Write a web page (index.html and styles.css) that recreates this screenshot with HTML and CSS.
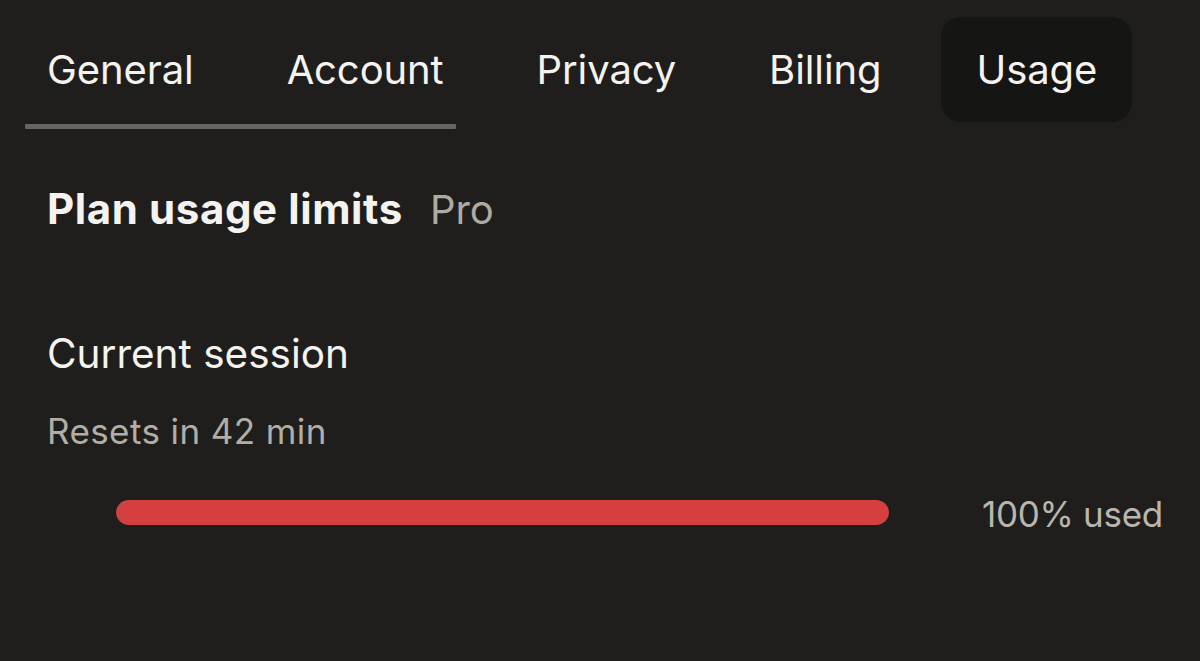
FILE: index.html
```html
<!DOCTYPE html>
<html lang="en">
<head>
<meta charset="utf-8">
<title>Usage</title>
<link rel="stylesheet" href="styles.css">
</head>
<body>
<div class="page">
  <nav class="tabs">
    <div class="tab">General</div>
    <div class="tab">Account</div>
    <div class="tab">Privacy</div>
    <div class="tab">Billing</div>
    <div class="tab active">Usage</div>
  </nav>
  <div class="indicator"></div>
  <section class="content">
    <div class="plan">
      <h1 class="plan-title">Plan usage limits</h1>
      <span class="plan-name">Pro</span>
    </div>
    <div class="session">
      <h2 class="session-title">Current session</h2>
      <p class="session-reset">Resets in 42 min</p>
    </div>
    <div class="meter">
      <div class="bar"><div class="fill" style="width:100%"></div></div>
      <span class="meter-label">100% used</span>
    </div>
  </section>
</div>
</body>
</html>
```

FILE: styles.css
```css
html, body {
  margin: 0;
  padding: 0;
  background: #1f1e1d;
}
body {
  font-family: Inter, "Noto Sans", sans-serif;
  color: #f4f3ef;
  width: 1200px;
  height: 661px;
  overflow: hidden;
}
.page {
  display: flex;
  flex-direction: column;
}
.tabs {
  display: flex;
  align-items: center;
  gap: 21px;
  padding: 17px 0 0 11px;
}
.tab {
  height: 105px;
  display: flex;
  align-items: center;
  padding: 0 36px;
  font-size: 40px;
  font-weight: 400;
  letter-spacing: -0.1px;
  border-radius: 20px;
}
.tab.active {
  margin-left: 2px;
  padding: 0 35px 0 36px;
  background: #151514;
}
.indicator {
  margin: 2px 0 0 25px;
  width: 431px;
  height: 5px;
  background: #66655f;
  border-radius: 1px;
}
.content {
  padding: 0 0 0 47px;
  display: flex;
  flex-direction: column;
}
.plan {
  display: flex;
  align-items: baseline;
  gap: 27px;
  margin-top: 54px;
}
.plan-title {
  margin: 0;
  font-size: 42px;
  font-weight: 700;
  letter-spacing: 0.6px;
  line-height: 52px;
}
.plan-name {
  font-size: 40px;
  color: #aeaba3;
}
.session {
  margin-top: 94px;
}
.session-title {
  margin: 0;
  font-size: 40.5px;
  font-weight: 400;
  line-height: 50px;
}
.session-reset {
  margin: 30px 0 0;
  font-size: 35px;
  color: #b1aea6;
  line-height: 44px;
  letter-spacing: 0.4px;
}
.meter {
  display: flex;
  align-items: center;
  margin: 37px 0 0 69px;
  gap: 93px;
}
.bar {
  width: 773px;
  height: 25px;
  border-radius: 13px;
  background: #3a3936;
  overflow: hidden;
}
.fill {
  height: 100%;
  background: #d63f40;
  border-radius: 13px;
}
.meter-label {
  padding-top: 3px;
  font-size: 35px;
  color: #b9b6ae;
  letter-spacing: -0.3px;
}
```
